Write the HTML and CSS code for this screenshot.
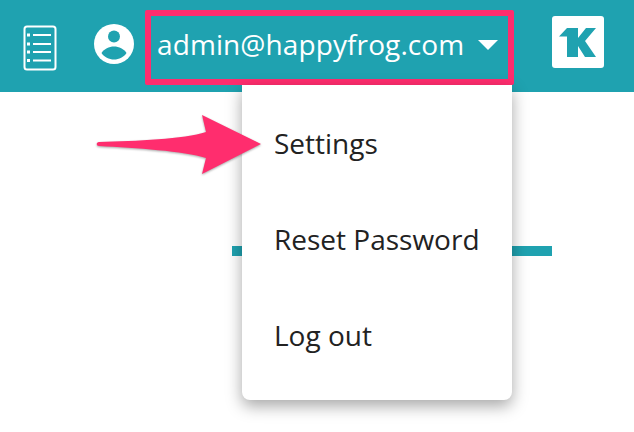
FILE: index.html
```html
<!DOCTYPE html>
<html lang="en">
<head>
<meta charset="UTF-8">
<meta name="viewport" content="width=device-width, initial-scale=1">
<title>Account menu</title>
<link rel="stylesheet" href="styles.css">
</head>
<body>

<header class="topbar">
    <svg class="list-icon" width="34" height="46" viewBox="0 0 34 46" fill="none" stroke="#fff" stroke-width="2">
        <rect x="1.500" y="1.500" width="31" height="43" rx="2.500"/>
        <path d="M10 10H28M10 19H28M10 27H28M10 35.500H28"/>
        <path d="M4 10H7M4 19H7M4 27H7M4 35.500H7" stroke-width="3"/>
    </svg>
    <svg class="user-icon" width="40" height="40" viewBox="0 0 40 40">
        <circle cx="20" cy="20" r="20" fill="#fff"/>
        <circle cx="20" cy="12.500" r="6" fill="#1fa2b0"/>
        <path d="M7.500 29C10 25 15 22.500 20 22.500C25 22.500 30 25 32.500 29C30 33 25 35.500 20 35.500C15 35.500 10 33 7.500 29Z" fill="#1fa2b0"/>
    </svg>
    <div class="user-box">
        <span class="user-email">admin@happyfrog.com</span>
        <span class="caret"></span>
    </div>
    <div class="logo">
        <svg width="38" height="30" viewBox="0 0 38 30" fill="#1fa2b0">
            <path d="M0 9.500L8 1H19V11L27 1H37L26 14L37 30H26L19 19V30H8V9.500Z"/>
        </svg>
    </div>
</header>

<main class="content">
    <div class="divider"></div>
</main>

<!-- Menu desplegable -->
<nav class="dropdown">
    <a href="#">Settings</a>
    <a href="#">Reset Password</a>
    <a href="#">Log out</a>
</nav>

<svg class="arrow" width="170" height="66" viewBox="0 0 170 66">
    <path d="M3 29C40 28 88 26 110 19L106 2L165 31L106 61L110 45C88 38 40 35 3 33C0 33 0 29 3 29Z" fill="#ff2d6e"/>
</svg>

</body>
</html>
```

FILE: styles.css
```css
body {
    margin: 0;
    background-color: #fff;
    font-family: "Open Sans", sans-serif;
    overflow: hidden;
}
.topbar {
    display: flex;
    align-items: center;
    height: 92px;
    padding-left: 23px;
    box-sizing: border-box;
    background-color: #1fa2b0;
}
.list-icon {
    margin-right: 37px;
    margin-top: 4px;
}
.user-icon {
    margin-right: 11px;
    margin-top: -4px;
}
.user-box {
    display: flex;
    align-items: center;
    box-sizing: border-box;
    width: 369px;
    height: 75px;
    margin-top: 3px;
    padding-left: 6px;
    padding-bottom: 8px;
    border: 6px solid #ff2d6e;
    border-radius: 2px;
    color: #fff;
}
.user-email {
    font-size: 28px;
    letter-spacing: 0.1px;
}
.caret {
    width: 0;
    height: 0;
    margin-left: 14px;
    margin-top: 3px;
    border-left: 10px solid transparent;
    border-right: 10px solid transparent;
    border-top: 10px solid #fff;
}
.logo {
    display: flex;
    align-items: center;
    justify-content: center;
    width: 52px;
    height: 52px;
    margin-left: 38px;
    margin-top: -8px;
    border-radius: 3px;
    background-color: #fff;
}
.content {
    display: flex;
    justify-content: flex-start;
    padding: 154px 0 0 232px;
}
.divider {
    width: 320px;
    height: 10px;
    background-color: #1fa2b0;
}
.dropdown {
    position: absolute;
    top: 85px;
    left: 242px;
    display: flex;
    flex-direction: column;
    width: 270px;
    height: 315px;
    padding: 10px 0;
    box-sizing: border-box;
    border-radius: 0 0 8px 8px;
    background-color: #fff;
    box-shadow: 0 6px 16px rgba(0, 0, 0, 0.35);
}
.dropdown a {
    display: flex;
    align-items: center;
    height: 96px;
    padding-left: 32px;
    color: #222;
    font-size: 28px;
    text-decoration: none;
}
.arrow {
    position: absolute;
    top: 113px;
    left: 96px;
    filter: drop-shadow(0 1px 1px rgba(0, 0, 0, 0.35));
}
```
